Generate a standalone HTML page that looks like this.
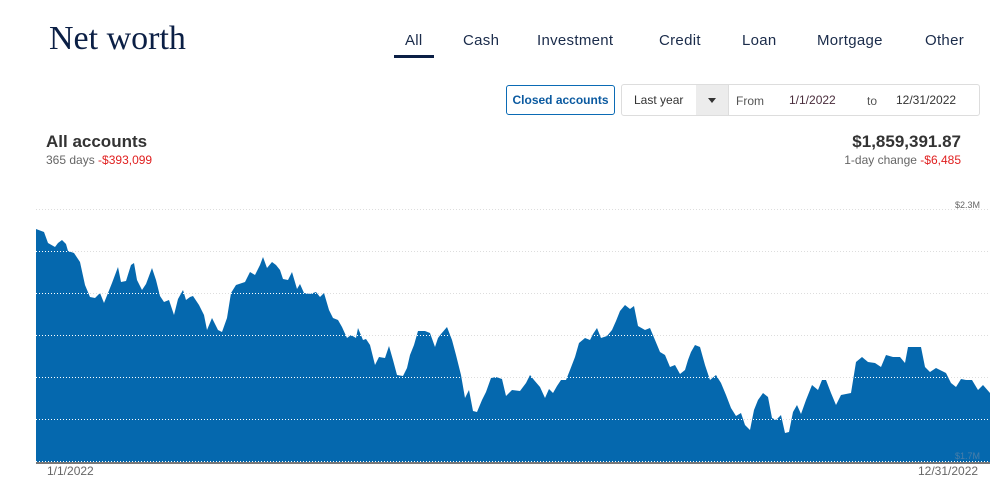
<!DOCTYPE html><html><head><style>
body{margin:0;width:1004px;height:492px;background:#fff;font-family:"Liberation Sans",sans-serif;position:relative;overflow:hidden}
.a{position:absolute;white-space:nowrap}
.tab{position:absolute;top:32px;font-size:15px;color:#1a2b4a;letter-spacing:0.3px}
</style></head><body>
<div class="a" style="left:49px;top:20px;font-family:'Liberation Serif',serif;font-size:34px;color:#0b1f45">Net worth</div>
<div class="tab" style="left:405px">All</div>
<div class="a" style="left:394px;top:55px;width:40px;height:3px;background:#0b1f45"></div>
<div class="tab" style="left:463px">Cash</div>
<div class="tab" style="left:537px">Investment</div>
<div class="tab" style="left:659px">Credit</div>
<div class="tab" style="left:742px">Loan</div>
<div class="tab" style="left:817px">Mortgage</div>
<div class="tab" style="left:925px">Other</div>
<div class="a" style="left:506px;top:85px;width:107px;height:28px;border:1px solid #0b6bb5;border-radius:3px;color:#0b5aa0;font-weight:bold;font-size:12px;line-height:28px;text-align:center">Closed accounts</div>
<div class="a" style="left:621px;top:84px;width:357px;height:30px;border:1px solid #ddd;border-radius:3px"></div>
<div class="a" style="left:634px;top:93px;font-size:12px;color:#333">Last year</div>
<div class="a" style="left:696px;top:85px;width:32px;height:30px;background:#ececec;border-right:1px solid #ddd"></div>
<div class="a" style="left:708px;top:98px;width:0;height:0;border-left:4px solid transparent;border-right:4px solid transparent;border-top:5px solid #333"></div>
<div class="a" style="left:736px;top:94px;font-size:12px;color:#555">From</div>
<div class="a" style="left:789px;top:93px;font-size:12px;color:#4a2d3c">1/1/2022</div>
<div class="a" style="left:867px;top:94px;font-size:12px;color:#555">to</div>
<div class="a" style="left:896px;top:93px;font-size:12px;color:#333">12/31/2022</div>
<div class="a" style="left:46px;top:132px;font-size:17px;font-weight:bold;color:#333">All accounts</div>
<div class="a" style="left:46px;top:153px;font-size:12px;color:#666">365 days <span style="color:#e02020">-$393,099</span></div>
<div class="a" style="right:43px;top:132px;font-size:17px;font-weight:bold;color:#333">$1,859,391.87</div>
<div class="a" style="right:43px;top:153px;font-size:12px;color:#666">1-day change <span style="color:#e02020">-$6,485</span></div>
<svg class="a" style="left:0;top:0" width="1004" height="492">
<defs><clipPath id="c"><polygon id="p" points="36,229 44,232 48,243 55,247 58,243 62,240 66,244 68,251 74,253 80,262 85,285 90,297 95,298 100,293 104,303 108,293 112,283 118,267 121,282 126,281 131,265 134,263 137,280 142,290 146,284 152,268 156,280 160,296 164,302 169,300 174,315 178,299 183,290 186,300 190,297 193,296 199,305 204,315 207,330 212,318 218,330 222,332 227,318 231,293 236,285 245,282 250,272 255,275 260,265 263,257 267,268 272,262 276,265 280,270 283,279 288,280 292,272 297,289 300,284 304,293 310,294 316,292 320,297 324,293 329,310 333,318 338,320 342,327 347,338 351,335 356,338 358,328 363,340 366,339 370,345 375,365 379,357 385,358 389,346 393,360 397,375 403,376 407,368 410,355 414,345 418,331 425,331 430,333 435,347 438,338 441,334 447,327 452,340 456,355 461,375 465,398 469,390 473,411 477,412 482,400 486,392 491,378 496,377 502,379 506,396 512,390 520,391 526,383 530,375 534,380 540,387 545,398 549,389 553,393 557,386 561,380 566,380 570,370 575,357 579,343 585,338 590,340 593,334 597,328 601,338 607,336 612,330 616,321 620,311 625,305 630,309 634,306 638,326 645,330 650,328 655,340 660,352 665,355 670,367 675,365 680,374 685,370 688,360 691,352 695,345 700,347 705,365 710,380 716,375 721,383 726,395 731,408 736,416 741,413 745,425 750,430 754,410 758,400 763,393 768,397 772,418 776,420 781,415 785,433 789,432 793,412 797,405 801,414 806,400 812,385 818,390 822,380 826,380 831,393 836,405 841,395 846,394 851,393 856,362 862,357 868,362 875,363 881,367 886,355 893,357 900,357 905,363 908,347 915,347 921,347 925,367 930,372 936,368 942,371 946,373 951,383 956,387 961,379 966,380 972,380 978,390 983,385 990,393 990,462 36,462"/></clipPath></defs>
<g stroke="#ddd" stroke-dasharray="1,2" stroke-width="1">
<line x1="36" x2="990" y1="209.5" y2="209.5"/><line x1="36" x2="990" y1="251.5" y2="251.5"/><line x1="36" x2="990" y1="293.5" y2="293.5"/><line x1="36" x2="990" y1="335.5" y2="335.5"/><line x1="36" x2="990" y1="377.5" y2="377.5"/><line x1="36" x2="990" y1="419.5" y2="419.5"/></g>
<use href="#p" fill="#0568ae"/>
<g clip-path="url(#c)" stroke="#fff" stroke-dasharray="1,2" stroke-width="1">
<line x1="36" x2="990" y1="251.5" y2="251.5"/><line x1="36" x2="990" y1="293.5" y2="293.5"/><line x1="36" x2="990" y1="335.5" y2="335.5"/><line x1="36" x2="990" y1="377.5" y2="377.5"/><line x1="36" x2="990" y1="419.5" y2="419.5"/></g>
<line x1="36" x2="990" y1="461.5" y2="461.5" stroke="#fff" stroke-dasharray="1,2"/>
<line x1="36" x2="990" y1="463" y2="463" stroke="#777" stroke-width="2"/>
<text x="980" y="208" font-size="9" fill="#666" text-anchor="end" font-family="Liberation Sans">$2.3M</text>
<text x="980" y="459" font-size="9" fill="#4a7ea8" text-anchor="end" font-family="Liberation Sans">$1.7M</text>
</svg>
<div class="a" style="left:47px;top:464px;font-size:12px;color:#666">1/1/2022</div>
<div class="a" style="left:918px;top:464px;font-size:12px;color:#666">12/31/2022</div>
</body></html>
